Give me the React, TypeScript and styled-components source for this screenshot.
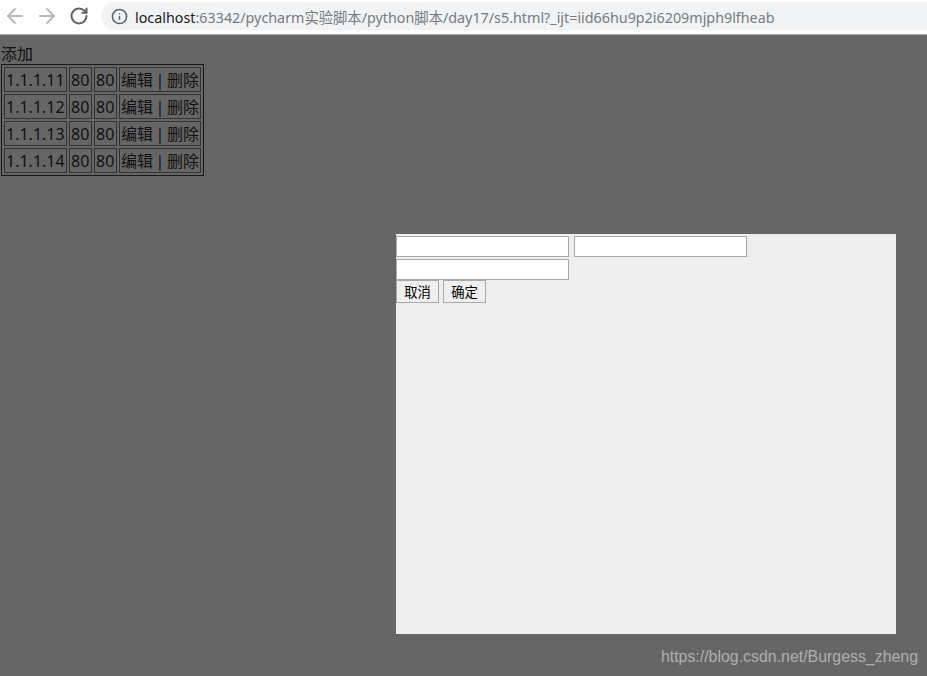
import { ArrowLeft, ArrowRight, Info, RotateCw } from 'lucide-react';
import styled, { createGlobalStyle } from 'styled-components';

const rows = ['1.1.1.11', '1.1.1.12', '1.1.1.13', '1.1.1.14'];

export default function App() {
  return (
    <>
      <GlobalStyle />
      <Toolbar>
        <NavButton $color="#bababa">
          <ArrowLeft size={24} strokeWidth={2} />
        </NavButton>
        <NavButton $color="#bababa">
          <ArrowRight size={24} strokeWidth={2} />
        </NavButton>
        <NavButton $color="#5f6368">
          <RotateCw size={20} strokeWidth={2.4} />
        </NavButton>
        <AddressBar>
          <Info size={17} color="#5f6368" strokeWidth={2.2} />
          <Url>
            <Host>localhost</Host>:63342/pycharm实验脚本/python脚本/day17/s5.html?_ijt=iid66hu9p2i6209mjph9lfheab
          </Url>
        </AddressBar>
      </Toolbar>
      <Page>
        <AddLink>添加</AddLink>
        <HostTable>
          <tbody>
            {rows.map((ip) => (
              <tr key={ip}>
                <Cell $width={59}>{ip}</Cell>
                <Cell $width={19}>80</Cell>
                <Cell $width={19}>80</Cell>
                <ActionCell $width={78}>编辑 | 删除</ActionCell>
              </tr>
            ))}
          </tbody>
        </HostTable>
        <Dialog>
          <FieldRow>
            <Field />
            <Field />
          </FieldRow>
          <FieldRow>
            <Field />
          </FieldRow>
          <ButtonRow>
            <DialogButton>取消</DialogButton>
            <DialogButton>确定</DialogButton>
          </ButtonRow>
        </Dialog>
        <Watermark>https://blog.csdn.net/Burgess_zheng</Watermark>
      </Page>
    </>
  );
}

const GlobalStyle = createGlobalStyle`
  html, body {
    margin: 0;
    padding: 0;
    background: #666666;
    overflow: hidden;
  }
`;

const Toolbar = styled.div`
  display: flex;
  align-items: center;
  box-sizing: border-box;
  height: 35px;
  padding: 0 0 2px 3px;
  background: #ffffff;
  border-bottom: 1px solid #a8a8a8;
`;

const NavButton = styled.div<{ $color: string }>`
  display: flex;
  align-items: center;
  justify-content: center;
  width: 24px;
  height: 24px;
  margin-right: 8px;
  color: ${(p) => p.$color};
`;

const AddressBar = styled.div`
  flex: 1;
  display: flex;
  align-items: center;
  gap: 7px;
  height: 28px;
  margin-left: 2px;
  padding-left: 10px;
  background: #f1f3f4;
  border-radius: 14px 0 0 14px;
`;

const Url = styled.span`
  font: 14.32px 'Noto Sans', 'Noto Sans CJK SC', sans-serif;
  color: #777b80;
  white-space: nowrap;
`;

const Host = styled.span`
  color: #202124;
`;

const Page = styled.div`
  position: relative;
  box-sizing: border-box;
  height: 641px;
  padding-top: 9px;
  font: 16px/21px 'Noto Sans', 'Noto Sans CJK SC', sans-serif;
  color: #000000;
`;

const AddLink = styled.div`
  height: 20px;
  padding-left: 1px;
  color: #111111;
`;

const HostTable = styled.table`
  margin-left: 1px;
  border: 1px solid #1a1a1a;
  border-spacing: 2px;
`;

const Cell = styled.td<{ $width: number }>`
  width: ${(p) => p.$width}px;
  padding: 2px 1px 0;
  border: 1px solid #333333;
  color: #111111;
  white-space: nowrap;
`;

const ActionCell = styled(Cell)`
  word-spacing: -1.6px;
`;

const Dialog = styled.div`
  position: absolute;
  top: 199px;
  left: 396px;
  width: 500px;
  height: 400px;
  padding-top: 2px;
  box-sizing: border-box;
  background: #eeeeee;
`;

const FieldRow = styled.div`
  display: flex;
  gap: 5px;
  margin-bottom: 2px;
`;

const Field = styled.input`
  box-sizing: border-box;
  width: 173px;
  height: 21px;
  padding: 1px 2px;
  background: #ffffff;
  border: 1px solid #a9a9a9;
  border-radius: 0;
  outline: none;
`;

const ButtonRow = styled.div`
  display: flex;
  gap: 4px;
  margin-top: -2px;
`;

const DialogButton = styled.button`
  box-sizing: border-box;
  width: 43px;
  height: 23px;
  padding: 0;
  background: #efefef;
  border: 1px solid #a9a9a9;
  border-radius: 0;
  font: 13.33px 'Liberation Sans', 'Noto Sans CJK SC', sans-serif;
  color: #000000;
`;

const Watermark = styled.div`
  position: absolute;
  right: 9px;
  bottom: 9px;
  font: 15.9px/20px 'Liberation Sans', sans-serif;
  color: #aeaeae;
`;
